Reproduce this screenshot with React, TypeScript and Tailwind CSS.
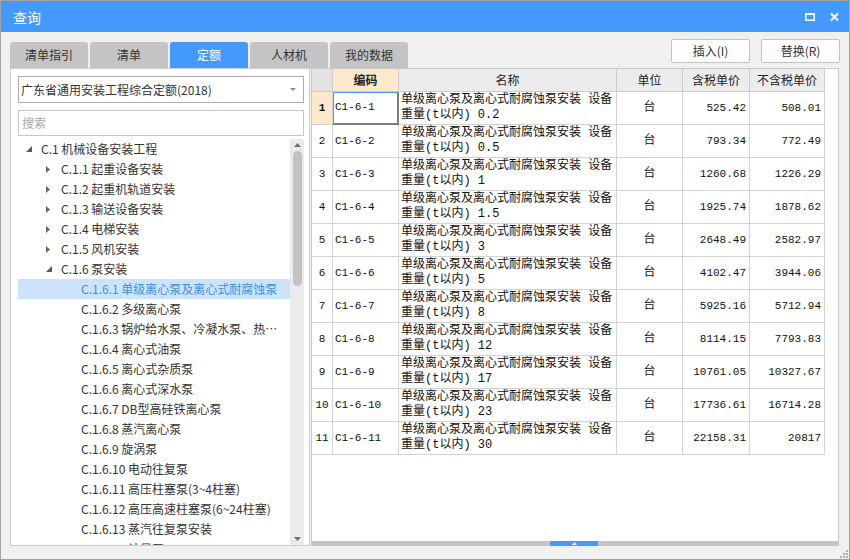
import React from 'react';

const UI_FONT = '"Noto Sans CJK SC", "Microsoft YaHei", sans-serif';
const GRID_FONT = '"Liberation Mono", "Noto Sans CJK SC", monospace';

type TreeItem = { text: string; level: number; expand?: 'open' | 'closed'; selected?: boolean };

const treeItems: TreeItem[] = [
    { text: 'C.1 机械设备安装工程', level: 0, expand: 'open' },
    { text: 'C.1.1 起重设备安装', level: 1, expand: 'closed' },
    { text: 'C.1.2 起重机轨道安装', level: 1, expand: 'closed' },
    { text: 'C.1.3 输送设备安装', level: 1, expand: 'closed' },
    { text: 'C.1.4 电梯安装', level: 1, expand: 'closed' },
    { text: 'C.1.5 风机安装', level: 1, expand: 'closed' },
    { text: 'C.1.6 泵安装', level: 1, expand: 'open' },
    { text: 'C.1.6.1 单级离心泵及离心式耐腐蚀泵', level: 2, selected: true },
    { text: 'C.1.6.2 多级离心泵', level: 2 },
    { text: 'C.1.6.3 锅炉给水泵、冷凝水泵、热水循环泵', level: 2 },
    { text: 'C.1.6.4 离心式油泵', level: 2 },
    { text: 'C.1.6.5 离心式杂质泵', level: 2 },
    { text: 'C.1.6.6 离心式深水泵', level: 2 },
    { text: 'C.1.6.7 DB型高硅铁离心泵', level: 2 },
    { text: 'C.1.6.8 蒸汽离心泵', level: 2 },
    { text: 'C.1.6.9 旋涡泵', level: 2 },
    { text: 'C.1.6.10 电动往复泵', level: 2 },
    { text: 'C.1.6.11 高压柱塞泵(3~4柱塞)', level: 2 },
    { text: 'C.1.6.12 高压高速柱塞泵(6~24柱塞)', level: 2 },
    { text: 'C.1.6.13 蒸汽往复泵安装', level: 2 },
    { text: 'C.1.6.14 计量泵', level: 2 },
];

// level -> indent (written out so tailwind picks them up)
const indent = ['pl-[6px]', 'pl-[26px]', 'pl-[46px]'];

const rows = [
    ['C1-6-1', '0.2', '525.42', '508.01'],
    ['C1-6-2', '0.5', '793.34', '772.49'],
    ['C1-6-3', '1', '1260.68', '1226.29'],
    ['C1-6-4', '1.5', '1925.74', '1878.62'],
    ['C1-6-5', '3', '2648.49', '2582.97'],
    ['C1-6-6', '5', '4102.47', '3944.06'],
    ['C1-6-7', '8', '5925.16', '5712.94'],
    ['C1-6-8', '12', '8114.15', '7793.83'],
    ['C1-6-9', '17', '10761.05', '10327.67'],
    ['C1-6-10', '23', '17736.61', '16714.28'],
    ['C1-6-11', '30', '22158.31', '20817'],
];

const tabs = ['清单指引', '清单', '定额', '人材机', '我的数据'];

const COLS = 'grid grid-cols-[21px_66px_218px_66px_67px_75px]';

const ExpandIcon = ({ state }: { state?: 'open' | 'closed' }) => {
    if (state === 'open') {
        return (
            <svg width="6" height="6" viewBox="0 0 6 6" className="ml-[2px]">
                <path d="M6 0 L6 6 L0 6 Z" fill="#5a5a5a" />
            </svg>
        );
    }
    if (state === 'closed') {
        return (
            <svg width="4" height="7" viewBox="0 0 4 7" className="ml-[2px]">
                <path d="M0 0 L4 3.5 L0 7 Z" fill="#666" />
            </svg>
        );
    }
    return null;
};

export default function App() {
    return (
        <div
            className="w-[850px] h-[560px] flex flex-col bg-[#f0f0f0] border border-[#a3a3a3] text-[#333] overflow-hidden"
            style={{ fontFamily: UI_FONT }}
        >
            {/* Title bar */}
            <div className="h-[31px] shrink-0 bg-[#4499fe] flex items-center justify-between pl-[12px] pr-[10px]">
                <span className="text-white text-[14px] leading-none">查询</span>
                <div className="flex items-center gap-[15px]">
                    <svg width="10" height="8" viewBox="0 0 10 8">
                        <rect x="0.75" y="1" width="8.5" height="6.25" fill="none" stroke="#fff" strokeWidth="1.5" />
                        <rect x="0" y="0" width="10" height="2" fill="#fff" />
                    </svg>
                    <svg width="9" height="8" viewBox="0 0 9 8">
                        <path d="M1 0.5 L8 7.5 M8 0.5 L1 7.5" stroke="#fff" strokeWidth="2" />
                    </svg>
                </div>
            </div>

            {/* Tabs + buttons */}
            <div className="h-[36px] shrink-0 flex items-end justify-between px-[9px]">
                <div className="flex gap-[2px]">
                    {tabs.map((t) => (
                        <div
                            key={t}
                            className={`w-[78px] h-[26px] rounded-t-[3px] flex items-center justify-center text-[12px] ${
                                t === '定额' ? 'bg-[#4499fe] text-white' : 'bg-[#c4c4c4] text-[#333]'
                            }`}
                        >
                            {t}
                        </div>
                    ))}
                </div>
                <div className="flex gap-[11px] mb-[5px]">
                    <button className="w-[79px] h-[24px] bg-[#fdfdfd] border border-[#c3c3c3] rounded-[2px] text-[12px] text-[#333]">
                        插入(I)
                    </button>
                    <button className="w-[79px] h-[24px] bg-[#fdfdfd] border border-[#c3c3c3] rounded-[2px] text-[12px] text-[#333]">
                        替换(R)
                    </button>
                </div>
            </div>

            {/* Content */}
            <div className="h-[478px] shrink-0 flex px-[9px]">
                {/* Left panel */}
                <div className="w-[300px] h-full flex flex-col bg-white border border-[#cdcdcd] pl-[7px] pr-[5px] pt-[7px]">
                    <div className="h-[27px] shrink-0 flex items-center justify-between border border-[#adadad] pl-[2px] pr-[7px]">
                        <span className="text-[12px] text-[#333]">广东省通用安装工程综合定额(2018)</span>
                        <svg width="6" height="3" viewBox="0 0 6 3">
                            <path d="M0 0 L6 0 L3 3 Z" fill="#8a8a8a" />
                        </svg>
                    </div>
                    <div className="h-[26px] shrink-0 mt-[7px] flex items-center border border-[#c6c6c6] pl-[3px]">
                        <span className="text-[12px] text-[#a8a8a8]">搜索</span>
                    </div>

                    <div className="flex-1 min-h-0 flex mt-[3px]">
                        {/* Tree */}
                        <div className="flex-1 min-w-0 overflow-hidden">
                            {treeItems.map((it) => (
                                <div
                                    key={it.text}
                                    className={`h-[20px] flex items-center pr-[10px] ${indent[it.level]} ${
                                        it.selected ? 'bg-[#cce4fa] text-[#3d8de6]' : 'text-[#333]'
                                    }`}
                                >
                                    <div className="w-[17px] shrink-0 flex items-center">
                                        <ExpandIcon state={it.expand} />
                                    </div>
                                    <span className="text-[12px] truncate leading-[20px]">{it.text}</span>
                                </div>
                            ))}
                        </div>

                        {/* Vertical scrollbar */}
                        <div className="w-[14px] shrink-0 bg-[#ebebeb] flex flex-col items-center">
                            <div className="h-[12px] flex items-center">
                                <svg width="7" height="4" viewBox="0 0 7 4">
                                    <path d="M0 4 L3.5 0 L7 4 Z" fill="#707070" />
                                </svg>
                            </div>
                            <div className="w-[9px] h-[135px] rounded-full bg-[#c2c2c2]" />
                            <div className="flex-1" />
                            <div className="h-[12px] flex items-center">
                                <svg width="7" height="4" viewBox="0 0 7 4">
                                    <path d="M0 0 L7 0 L3.5 4 Z" fill="#707070" />
                                </svg>
                            </div>
                        </div>
                    </div>
                </div>

                {/* Right panel */}
                <div className="w-[528px] h-full ml-[1px] flex flex-col bg-white border-t border-l border-r border-[#c9c9c9]">
                    <div className="flex-1 min-h-0">
                        {/* Header */}
                        <div className={`${COLS} h-[23px] text-[12px] text-[#222]`}>
                            <div className="bg-[#e3e3e3] border-r border-b border-[#cdcdcd]" />
                            <div className="bg-[#fde8cc] border-r border-b border-[#cdcdcd] flex items-center justify-center font-bold">
                                编码
                            </div>
                            <div className="bg-[#ececec] border-r border-b border-[#cdcdcd] flex items-center justify-center">名称</div>
                            <div className="bg-[#ececec] border-r border-b border-[#cdcdcd] flex items-center justify-center">单位</div>
                            <div className="bg-[#ececec] border-r border-b border-[#cdcdcd] flex items-center justify-center">含税单价</div>
                            <div className="bg-[#ececec] border-r border-b border-[#cdcdcd] flex items-center justify-center">不含税单价</div>
                        </div>

                        {/* Body */}
                        {rows.map(([code, weight, tax, noTax], i) => {
                            const first = i === 0;
                            return (
                                <div key={code} className={`${COLS} h-[33px] text-[#111]`} style={{ fontFamily: GRID_FONT }}>
                                    <div
                                        className={`border-r border-b border-[#d3d3d3] flex items-center justify-center text-[11px] ${
                                            first ? 'bg-[#fde8cc] font-bold' : ''
                                        }`}
                                    >
                                        {i + 1}
                                    </div>
                                    <div
                                        className={`flex items-center pl-[2px] text-[11px] ${
                                            first
                                                ? 'border-r-2 border-b-2 border-[#7c7c7c] shadow-[inset_1px_1px_0_#4499fe]'
                                                : 'border-r border-b border-[#d3d3d3]'
                                        }`}
                                    >
                                        {code}
                                    </div>
                                    <div className="border-r border-b border-[#d3d3d3] flex flex-col justify-center pl-[2px] text-[12px] leading-[15px] whitespace-nowrap overflow-hidden">
                                        <span>单级离心泵及离心式耐腐蚀泵安装 设备</span>
                                        <span>重量(t以内) {weight}</span>
                                    </div>
                                    <div className="border-r border-b border-[#d3d3d3] flex items-center justify-center text-[12px]">台</div>
                                    <div className="border-r border-b border-[#d3d3d3] flex items-center justify-end pr-[3px] text-[11px]">
                                        {tax}
                                    </div>
                                    <div className="border-r border-b border-[#d3d3d3] flex items-center justify-end pr-[3px] text-[11px]">
                                        {noTax}
                                    </div>
                                </div>
                            );
                        })}
                    </div>

                    {/* Horizontal scrollbar */}
                    <div className="h-[5px] shrink-0 bg-[#c4c4c4] flex">
                        <div className="w-[238px]" />
                        <div className="w-[48px] h-full bg-[#4499fe] flex items-center justify-center">
                            <svg width="5" height="3" viewBox="0 0 5 3">
                                <path d="M0 3 L2.5 0 L5 3 Z" fill="#fff" />
                            </svg>
                        </div>
                    </div>
                </div>
            </div>

            {/* Bottom strip with resize grip */}
            <div className="flex-1 flex items-end justify-end pr-[1px] pb-[1px]">
                <svg width="9" height="9" viewBox="0 0 9 9">
                    <rect x="7" y="1" width="2" height="2" fill="#b0b0b0" />
                    <rect x="4" y="4" width="2" height="2" fill="#b0b0b0" />
                    <rect x="7" y="4" width="2" height="2" fill="#b0b0b0" />
                    <rect x="1" y="7" width="2" height="2" fill="#b0b0b0" />
                    <rect x="4" y="7" width="2" height="2" fill="#b0b0b0" />
                    <rect x="7" y="7" width="2" height="2" fill="#b0b0b0" />
                </svg>
            </div>
        </div>
    );
}
